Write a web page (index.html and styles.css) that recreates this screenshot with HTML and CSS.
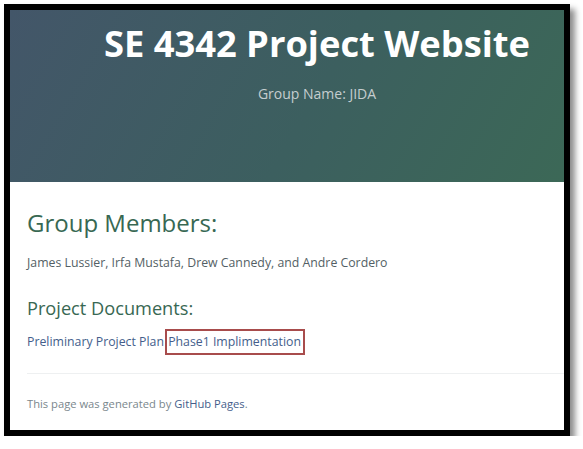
FILE: index.html
```html
<!DOCTYPE html>
<html lang="en">
<head>
<meta charset="utf-8">
<title>SE 4342 Project Website</title>
<link rel="stylesheet" href="styles.css">
</head>
<body>
<div class="frame">
  <div class="page">
    <header class="page-header">
      <h1 class="project-name">SE 4342 Project Website</h1>
      <h2 class="project-tagline">Group Name: JIDA</h2>
    </header>
    <main class="main-content">
      <h2 class="section-title">Group Members:</h2>
      <p class="members">James Lussier, Irfa Mustafa, Drew Cannedy, and Andre Cordero</p>
      <h3 class="sub-title">Project Documents:</h3>
      <p class="docs"><a href="#">Preliminary Project Plan</a> <a href="#" class="highlight">Phase1 Implimentation</a></p>
      <footer class="site-footer">
        <span class="credits">This page was generated by <a href="#">GitHub Pages</a>.</span>
      </footer>
    </main>
  </div>
</div>
</body>
</html>
```

FILE: styles.css
```css
html, body {
  margin: 0;
  padding: 0;
  background: #ffffff;
}

body {
  font-family: "Open Sans", "Liberation Sans", sans-serif;
}

.frame {
  margin: 4px 0 0 4px;
  width: 554px;
  height: 420px;
  border: 6px solid #000000;
  box-shadow: 5px 5px 6px rgba(0, 0, 0, 0.45);
  overflow: hidden;
  background: #ffffff;
}

.page {
  width: 614px;
}

.page-header {
  height: 172px;
  box-sizing: border-box;
  padding-top: 11px;
  text-align: center;
  background: linear-gradient(120deg, #435669 0%, #3c5f5f 50%, #3c6a55 100%);
}

.project-name {
  margin: 0;
  font-size: 36.3px;
  line-height: 44px;
  font-weight: 700;
  color: #ffffff;
}

.project-tagline {
  margin: 19px 0 0;
  font-size: 14px;
  line-height: 20px;
  font-weight: 400;
  color: #c5cdcf;
}

.main-content {
  padding: 26px 0 0 17px;
}

.section-title {
  margin: 0;
  font-size: 24px;
  line-height: 30px;
  font-weight: 400;
  color: #386853;
}

.members {
  margin: 16px 0 0;
  font-size: 12.3px;
  line-height: 18px;
  color: #545f65;
}

.sub-title {
  margin: 24px 0 0;
  font-size: 18.2px;
  line-height: 24px;
  font-weight: 400;
  color: #386853;
}

.docs {
  margin: 13px 0 0;
  font-size: 12.3px;
  line-height: 18px;
}

a {
  color: #445e8b;
  text-decoration: none;
}

.highlight {
  margin-left: -2px;
  padding: 2px 2px 3px 1px;
  border: 2px solid #a84c4c;
}

.site-footer {
  margin-top: 22px;
  border-top: 1px solid #eef0f1;
  padding-top: 21px;
}

.credits {
  display: block;
  font-size: 11.2px;
  line-height: 18px;
  color: #7a878d;
}
```
